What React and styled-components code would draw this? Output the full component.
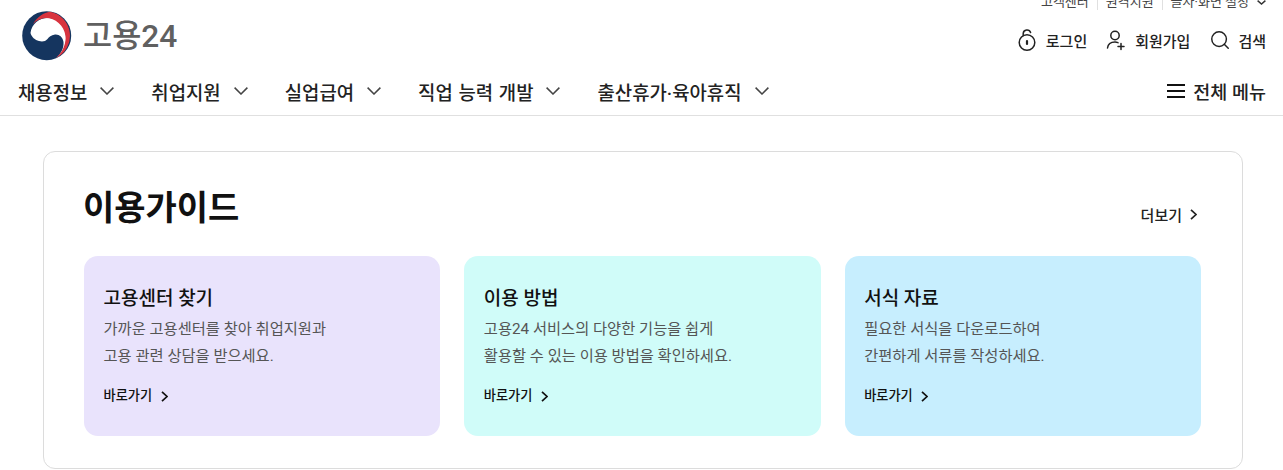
import React from 'react'
import styled, { createGlobalStyle } from 'styled-components'
import { Search } from 'lucide-react'

const FONT = `Roboto, "Noto Sans CJK KR", "Noto Sans", sans-serif`

const GlobalStyle = createGlobalStyle`
  html, body {
    margin: 0;
    padding: 0;
    background: #fff;
    overflow: hidden;
  }
  body {
    font-family: ${FONT};
    color: #111;
  }
  * { box-sizing: border-box; }
`

const Page = styled.div`
  width: 1283px;
  height: 470px;
  overflow: hidden;
`

const Header = styled.header`
  height: 116px;
  border-bottom: 1px solid #e0e0e0;
  padding: 0 17px 0 18px;
  display: flex;
  flex-direction: column;
`

const UtilBar = styled.div`
  height: 10px;
  display: flex;
  justify-content: flex-end;
  align-items: flex-end;
  gap: 8px;
  overflow: hidden;
`

const UtilItem = styled.span`
  display: flex;
  align-items: center;
  gap: 8px;
  font-size: 13px;
  line-height: 18px;
  height: 18px;
  flex: none;
  color: #444;
  margin-bottom: -1px;
`

const UtilDivider = styled.i`
  width: 1px;
  height: 14px;
  background: #e0e0e0;
  flex: none;
`

const MainRow = styled.div`
  height: 52px;
  display: flex;
  align-items: center;
  justify-content: space-between;
`

const Logo = styled.div`
  display: flex;
  align-items: center;
  gap: 11px;
  padding-left: 4px;
`

const LogoText = styled.span`
  font-size: 31.7px;
  line-height: 40px;
  font-weight: 500;
  color: #606060;
  padding-top: 1px;
`

const Actions = styled.div`
  display: flex;
  align-items: center;
  gap: 19px;
  padding-top: 8px;
`

const Action = styled.a`
  display: flex;
  align-items: center;
  gap: ${({ $gap }) => $gap || 9}px;
  font-size: 15px;
  font-weight: 500;
  color: #222;
`

const NavRow = styled.nav`
  flex: 1;
  display: flex;
  align-items: center;
  justify-content: space-between;
  padding-top: 5px;
`

const NavList = styled.div`
  display: flex;
  align-items: center;
  gap: 37px;
`

const NavItem = styled.a`
  display: flex;
  align-items: center;
  gap: 13px;
  font-size: 18.85px;
  font-weight: 500;
  word-spacing: 1px;
  color: #222;
`

const AllMenu = styled.a`
  display: flex;
  align-items: center;
  gap: 8px;
  font-size: 18.5px;
  font-weight: 500;
  color: #222;
`

const Panel = styled.section`
  margin: 35px 40px 0 43px;
  height: 318px;
  border: 1px solid #dcdcdc;
  border-radius: 12px;
  padding: 28px 41px 0 40px;
`

const PanelHead = styled.div`
  display: flex;
  align-items: center;
  justify-content: space-between;
  height: 76px;
`

const PanelTitle = styled.h2`
  margin: 0 0 20px -1px;
  font-size: 34px;
  line-height: 50px;
  font-weight: 700;
  color: #111;
`

const More = styled.a`
  display: flex;
  align-items: center;
  gap: 8px;
  font-size: 15px;
  font-weight: 500;
  color: #222;
  padding-right: 4px;
  margin-bottom: 7px;
`

const Cards = styled.div`
  display: grid;
  grid-template-columns: repeat(3, 1fr);
  gap: 24px;
`

const Card = styled.article`
  height: 180px;
  border-radius: 14px;
  padding: 29px 19px 0 19.5px;
  background: ${({ $bg }) => $bg};
`

const CardTitle = styled.h3`
  margin: 0;
  font-size: 19px;
  line-height: 28px;
  font-weight: 500;
  color: #111;
`

const CardDesc = styled.p`
  margin: 2.5px 0 0;
  font-size: 15.3px;
  line-height: 27px;
  color: #555;
`

const CardLink = styled.a`
  display: flex;
  align-items: center;
  gap: 8.5px;
  margin-top: 16.5px;
  font-size: 13.2px;
  line-height: 20px;
  font-weight: 500;
  color: #111;
`

const TaegukLogo = () => (
  <svg width="50" height="50" viewBox="0 0 50 50">
    <circle cx="24.7" cy="24.7" r="24.5" fill="#15355f" />
    <path d="M8.5 22 C9.5 12 19 6 27 7 C38 8 45 18 44 29 C43 38 40 43 34 47 C39 43 42 37 41.5 31 C41 26 37 23 33 23.5 C29 24 27 26 25.5 28 C23.5 30.5 20 31 17 30 C13 29 9.5 26 8.5 22 Z" fill="#fff" />
    <path d="M11 13 C15 6 22 1.5 28 .8 A24.5 24.5 0 0 1 34 47 C40 42 44.5 33 43.5 25 C42 14 33 7 24 7 C19 7 14.5 9.5 11 13 Z" fill="#d8343f" />
  </svg>
)

const Chevron = ({ w = 14, h = 8, dir = 'down', color = '#333', sw = 1.5 }) => (
  <svg width={w} height={h} viewBox={`0 0 ${w} ${h}`} fill="none" stroke={color} strokeWidth={sw}>
    {dir === 'down'
      ? <path d={`M.6 .6 L${w / 2} ${h - 1} L${w - 0.6} .6`} />
      : <path d={`M1 .8 L${w - 1} ${h / 2} L1 ${h - 0.8}`} />}
  </svg>
)

const LockIcon = () => (
  <svg width="20" height="24" viewBox="0 0 20 24" fill="none" stroke="#222" strokeWidth="1.5" strokeLinecap="round">
    <circle cx="10" cy="14.5" r="7.8" />
    <path d="M6.2 7.6 V5.5 a3.8 3.8 0 0 1 7.4 -1" />
    <path d="M10 13 v3" strokeWidth="2.2" />
  </svg>
)

const JoinIcon = () => (
  <svg width="20" height="22" viewBox="0 0 20 22" fill="none" stroke="#222" strokeWidth="1.5" strokeLinecap="round">
    <circle cx="9" cy="6.5" r="4.2" />
    <path d="M1.5 19 C2 15 5 13 9 13 C10 13 11 13.2 12 13.6" />
    <path d="M15 14.5 v6 M12 17.5 h6" />
  </svg>
)

const MenuIcon = () => (
  <svg width="18" height="16" viewBox="0 0 18 16" stroke="#111" strokeWidth="2">
    <path d="M0 2 H18 M0 8 H18 M0 14 H18" />
  </svg>
)

const navItems = ['채용정보', '취업지원', '실업급여', '직업 능력 개발', '출산휴가·육아휴직']

const cards = [
  { bg: '#e9e3fc', title: '고용센터 찾기', lines: ['가까운 고용센터를 찾아 취업지원과', '고용 관련 상담을 받으세요.'] },
  { bg: '#d0fcf9', title: '이용 방법', lines: ['고용24 서비스의 다양한 기능을 쉽게', '활용할 수 있는 이용 방법을 확인하세요.'] },
  { bg: '#c7eefe', title: '서식 자료', lines: ['필요한 서식을 다운로드하여', '간편하게 서류를 작성하세요.'] },
]

export default function App() {
  return (
    <Page>
      <GlobalStyle />
      <Header>
        <UtilBar>
          <UtilItem>고객센터</UtilItem>
          <UtilDivider />
          <UtilItem>원격지원</UtilItem>
          <UtilDivider />
          <UtilItem>
            글자·화면 설정
            <Chevron w={9} h={5} sw={1.4} />
          </UtilItem>
        </UtilBar>
        <MainRow>
          <Logo>
            <TaegukLogo />
            <LogoText>고용24</LogoText>
          </Logo>
          <Actions>
            <Action><LockIcon />로그인</Action>
            <Action><JoinIcon />회원가입</Action>
            <Action $gap={7}><Search size={22} strokeWidth={1.6} color="#222" />검색</Action>
          </Actions>
        </MainRow>
        <NavRow>
          <NavList>
            {navItems.map((label) => (
              <NavItem key={label}>
                {label}
                <Chevron color="#444" />
              </NavItem>
            ))}
          </NavList>
          <AllMenu>
            <MenuIcon />
            전체 메뉴
          </AllMenu>
        </NavRow>
      </Header>
      <Panel>
        <PanelHead>
          <PanelTitle>이용가이드</PanelTitle>
          <More>더보기<Chevron dir="right" w={7} h={11} sw={1.7} color="#222" /></More>
        </PanelHead>
        <Cards>
          {cards.map((card) => (
            <Card key={card.title} $bg={card.bg}>
              <CardTitle>{card.title}</CardTitle>
              <CardDesc>{card.lines[0]}<br />{card.lines[1]}</CardDesc>
              <CardLink>바로가기<Chevron dir="right" w={7} h={11} sw={1.7} color="#111" /></CardLink>
            </Card>
          ))}
        </Cards>
      </Panel>
    </Page>
  )
}
